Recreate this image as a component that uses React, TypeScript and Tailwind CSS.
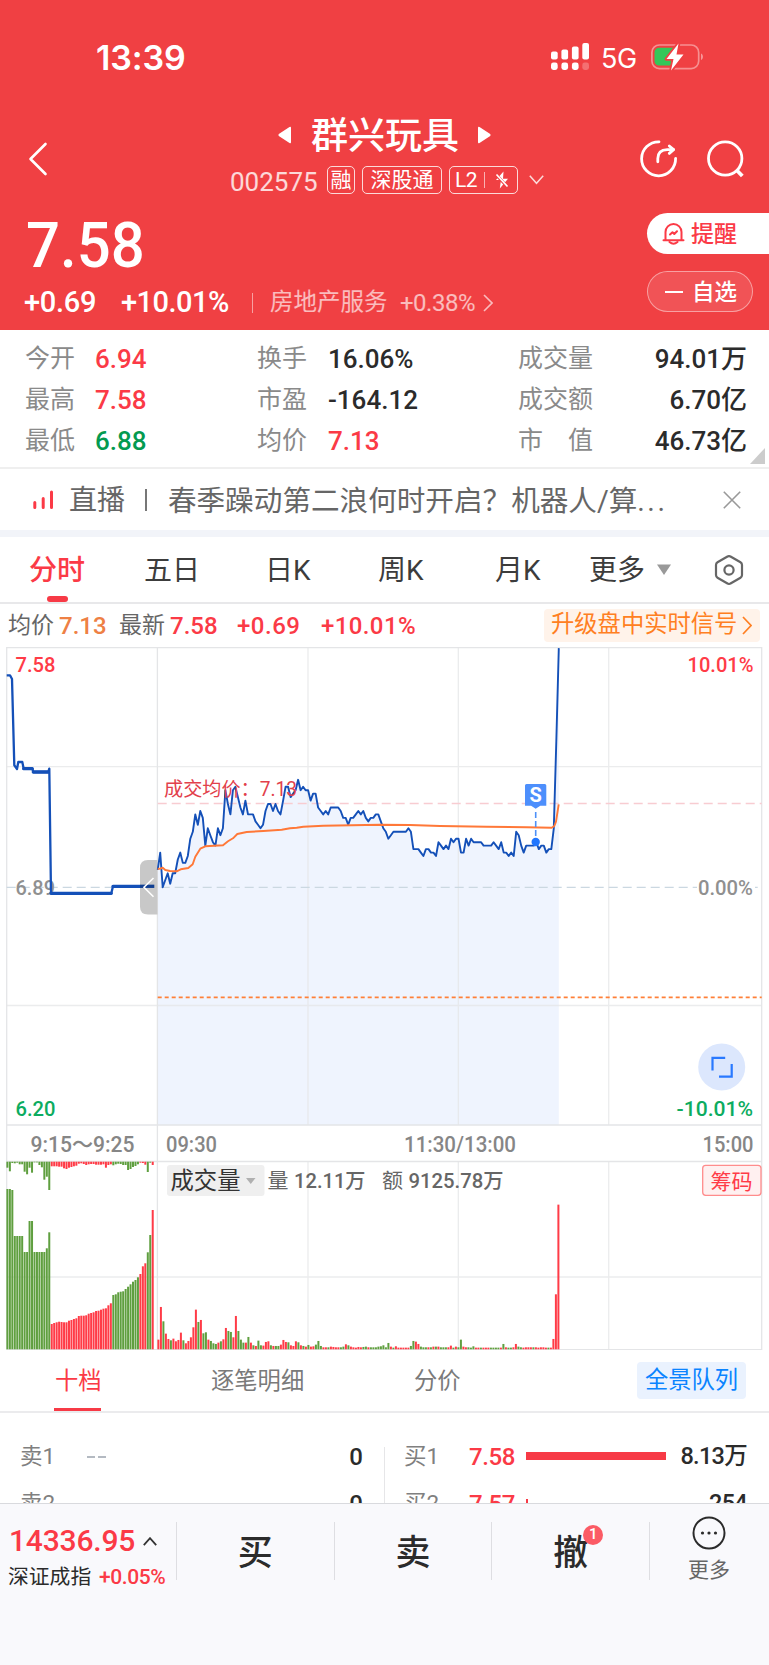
import type { ReactNode } from "react";

const UP = "#ff3b47";
const DOWN = "#5f9f3f";

// Minute prices, in ticks of 0.01 above the previous close (6.89)
const PRICE_TICKS = [
  5, 10, 0, 2, 4, 1, 4, 4, 8, 10, 7, 7, 9, 14, 16, 21, 18, 22, 20, 12,
  17, 15, 13, 12, 17, 15, 17, 28, 24, 21, 28, 29, 26, 23, 21, 25, 21, 21, 21, 19,
  18, 17, 18, 22, 24, 24, 22, 24, 22, 21, 25, 29, 29, 26, 27, 28, 31, 28, 29, 28,
  28, 25, 27, 27, 23, 22, 21, 22, 21, 23, 23, 23, 23, 22, 20, 20, 18, 20, 20, 21,
  22, 21, 22, 20, 19, 20, 20, 21, 21, 19, 17, 16, 14, 15, 16, 16, 16, 16, 16, 16,
  17, 16, 11, 11, 11, 10, 9, 11, 11, 10, 10, 9, 13, 12, 11, 12, 11, 14, 13, 14,
  14, 10, 10, 14, 12, 14, 13, 13, 13, 13, 12, 12, 12, 12, 13, 12, 11, 13, 10, 10,
  9, 10, 9, 16, 15, 12, 10, 12, 12, 12, 12, 13, 11, 12, 12, 10, 11, 11, 17, 42, 69
];

const AVG_POINTS =
  "157.7,868.7 160.3,868.7 162.7,867.7 165.3,870 170,871 176.7,871.3 180.7,869.3 188.3,868 192.7,864.3 195.3,856.7 200.3,848.7 205.3,846.3 223,845.3 228,841.3 233,838.3 237.3,834 246.7,832 263.3,831 281.7,829.7 290,828.3 296.7,827.7 303.3,826.7 323.3,825.7 380,824.7 410,825 440,826 486.7,826.7 526.7,827.3 551.7,827.7 554.3,826 556,821.7 558.7,804.3";

const AUCTION_POINTS =
  "6.7,675.3 10,675.3 12,679 14.3,765.3 17,769 18.3,762 22.3,762 23.7,768.7 32.3,768.7 33.3,772 48.3,772 49.3,768.7 51,893.3 111.3,893.3 113,886.3 154.3,886.3";

// Call auction: matched volume (bottom) and unmatched volume (hanging from the top)
const AUCTION_VOLUME = [
  160.3, 160.3, 159.3, 113.3, 113.3, 113.3, 113.3, 97.3, 97.3, 128.3, 128.3, 97.3, 97.3, 97.3, 97.3, 97.3, 101, 117,
  25.3, 26.3, 27, 27.6, 27.3, 27, 27, 28.6, 29.3, 30.3, 31, 33.3, 33.6, 33.6, 34, 35.6, 36.3, 37, 38.3, 38.6, 39.6, 40.6, 41, 44, 46,
  54.3, 55, 57, 57.6, 58, 60.3, 62.6, 65, 67.6, 69.3, 72,
  75.3, 83, 86, 97, 114.3, 139.3
];
const AUCTION_REST = [
  6, 9.6, 1.3, 1.6, 1, 2.6, 2.6, 10, 12.6, 6, 11, 0.7, 0.7, 3.3, 5.6, 18, 15, 28.3,
  4.6, 4.6, 4.6, 5, 5, 6.6, 7.3, 6, 5.3, 4.6, 4, 2, 1.6, 2.3, 3.3, 2.6, 2.3, 2.3, 3, 3, 3, 2.6, 6, 3.3, 2.6,
  3.6, 2.6, 2, 2.3, 3.3, 3.3, 8.3, 7.3, 5.3, 4.3, 2.6,
  1, 1.3, 3, 10.3, 1, 3.3
];

// "height + direction" for each minute, r = up and g = down
const OPEN_VOLUME =
  "29r 127r 84g 47r 31r 27g 32r 24r 28r 50r 27g 18r 25r 36r 66r 119r 82g 88r 48g 51g 29r 25g 18g 16g 20r 24g 30r 64r 55g 52g 36r 100r 55g 29g 20g 20r 37g 20r 12g 10r 26g 12g 11r 22r 24r 12g 10r 10g 10g 14r 28r 22r 21g 12r 10r 24r 21g 12r 10g 8r 13g 8r 9r 14g 25g 10g 6r 6r 6g 8r 7r 6r 6r 6g 8g 15r 12g 8r 6r 5r 7r 6r 7g 8g 6r 6g 6g 6g 8g 9g 12g 6g 19g 8r 5g 9r 5r 5r 5r 5r 5r 10g 25g 23r 16r 8g 6g 6g 6r 6g 8r 8g 8r 6g 6g 6g 6r 11r 5g 8r 6g 29g 8r 6r 6g 5g 9g 5r 5r 5g 5r 5r 5r 5g 5g 5g 5g 5r 16g 6r 5g 5g 6r 16r 8g 6g 5r 6r 6r 6r 6g 6r 5r 6r 6r 5r 5g 5r 31r 165r 434r".split(
    " "
  );

const priceLine = PRICE_TICKS.map((t, i) => `${(157.7 + i * 2.507).toFixed(1)},${(887.2 - t * 3.465).toFixed(1)}`).join(" ");

function auctionColor(i: number) {
  if (i < 18) return DOWN;
  if (i < 43) return UP;
  if (i < 54) return DOWN;
  if (i < 57) return UP;
  return i === 59 ? UP : DOWN;
}

type ChartTextProps = { x: number; y: number; w: number; size?: number; fill?: string; weight?: number; children: ReactNode };

function ChartText({ x, y, w, size = 21, fill = "#868686", weight = 500, children }: ChartTextProps) {
  return (
    <text x={x} y={y} textLength={w} lengthAdjust="spacingAndGlyphs" fontSize={size} fontWeight={weight} fill={fill}>
      {children}
    </text>
  );
}

function StatusBar() {
  return (
    <div className="flex h-[114px] items-center pl-[96px]">
      <span className="w-[455px] pt-px font-[Inter] text-[34px] font-semibold leading-none tracking-[-0.1px]">13:39</span>
      <svg width="38" height="28" viewBox="0 0 38 28" fill="#fff">
        <rect x="0" y="8.5" width="6.7" height="8" rx="2" />
        <rect x="10.4" y="6.5" width="6.7" height="10" rx="2" />
        <rect x="20.9" y="3.5" width="6.7" height="13" rx="2" />
        <rect x="31.3" y="0" width="6.7" height="16.5" rx="2" />
        <rect x="0" y="19.5" width="6.7" height="7.5" rx="2.4" />
        <rect x="10.4" y="19.5" width="6.7" height="7.5" rx="2.4" />
        <rect x="20.9" y="19.5" width="6.7" height="7.5" rx="2.4" />
        <rect x="31.3" y="19.5" width="6.7" height="7.5" rx="2.4" opacity="0.25" />
      </svg>
      <span className="ml-[12px] w-[50px] whitespace-nowrap pt-[2px] font-[Inter] text-[27px] leading-none tracking-[-0.5px]">5G</span>
      <svg width="54" height="28" viewBox="0 0 54 28">
        <rect x="0.9" y="2" width="46.8" height="23.6" rx="7.5" fill="none" stroke="#fff" strokeOpacity="0.42" strokeWidth="1.7" />
        <path d="M50 10.5c2.6.9 2.6 5.7 0 6.6z" fill="#fff" fillOpacity="0.45" />
        <path d="M8 4.8h16v17.8H8a4.5 4.5 0 0 1-4.5-4.5V9.3A4.5 4.5 0 0 1 8 4.8z" fill="#34c759" />
        <path d="M27.5.5 15.5 16h7L20 27.5 32.5 11.5h-7z" fill="#fff" stroke="#f04043" strokeWidth="3.6" paintOrder="stroke" strokeLinejoin="round" />
      </svg>
    </div>
  );
}

function TitleBar() {
  return (
    <div className="flex h-[90px]">
      <div className="flex w-[230px] items-center pl-[28px]">
        <svg width="21" height="34" viewBox="0 0 21 34" fill="none" stroke="#fff" strokeWidth="2.6" strokeLinecap="round" strokeLinejoin="round">
          <path d="M17.5 2 2.500 17l15 15" />
        </svg>
      </div>
      <div className="w-[326px]">
        <div className="flex h-[42px] items-center pl-[48px]">
          <svg width="13" height="18" viewBox="0 0 13 18" fill="#fff">
            <path d="M11.500 1Q13 0 13 2v14q0 2-1.500 1L.8 10Q0 9 .8 8z" />
          </svg>
          <h1 className="ml-[20px] w-[167px] whitespace-nowrap pt-[2px] text-[37px] font-medium leading-none">群兴玩具</h1>
          <svg width="13" height="18" viewBox="0 0 13 18" fill="#fff">
            <path d="M1.500 1Q0 0 0 2v14q0 2 1.500 1l10.700-7q.8-1 0-2z" />
          </svg>
        </div>
        <div className="flex h-[48px] items-center">
          <span className="w-[97px] pt-[3px] text-[26px] leading-none text-white/80">002575</span>
          <span className="flex h-[28px] w-[28px] items-center justify-center rounded-[5px] border border-white/80 pt-px text-[21px] leading-none">融</span>
          <span className="ml-[7px] flex h-[28px] w-[80px] items-center justify-center whitespace-nowrap rounded-[5px] border border-white/80 pt-px text-[21px] leading-none">
            深股通
          </span>
          <span className="ml-[7px] flex h-[28px] w-[69px] items-center rounded-[5px] border border-white/80 pl-[5px]">
            <span className="w-[29px] text-[21px] leading-none tracking-[-0.5px]">L2</span>
            <span className="h-4 w-px bg-white/60" />
            <svg className="ml-[10px]" width="14" height="18" viewBox="0 0 14 18">
              <path d="M8.500.5 1 9h5L4.800 17.500 13 7.800H8z" fill="#fff" />
              <path d="M1 3.500 12.500 16" stroke="#f04043" strokeWidth="3" />
              <path d="M1.500 3.500 12.500 15.500" stroke="#fff" strokeWidth="1.700" />
            </svg>
          </span>
          <svg className="ml-[11px] shrink-0" width="15" height="10" viewBox="0 0 15 10" fill="none" stroke="#fff" strokeOpacity="0.8" strokeWidth="1.5">
            <path d="m.8.800 6.700 7.500L14.200.8" />
          </svg>
        </div>
      </div>
      <div className="flex items-center pl-[84px]">
        <svg width="38" height="38" viewBox="0 0 38 38" fill="none" stroke="#fff" strokeWidth="2.8" strokeLinecap="round" strokeLinejoin="round">
          <path d="M19 1.800A17 17 0 1 0 35.600 18.300" />
          <path d="M17.800 21.800v-3.300q0-8.500 9.500-8.900h6.200" />
          <path d="m29.300 6 4.300 3.600-4.300 3.800" />
        </svg>
        <svg className="ml-[29px]" width="38" height="38" viewBox="0 0 38 38" fill="none" stroke="#fff" strokeWidth="2.8">
          <circle cx="18.2" cy="18.5" r="16.7" />
          <path d="m29.500 30 5.800 6" strokeWidth="3.8" />
        </svg>
      </div>
    </div>
  );
}

function PriceSummary() {
  return (
    <div className="flex h-[126px] justify-between">
      <div>
        <div className="flex h-[81px] items-center pl-[26px] pt-[2px] text-[63px] font-medium leading-none">
          <span className="origin-left scale-x-[0.95]">7.58</span>
        </div>
        <div className="flex h-[34px] items-center whitespace-nowrap pl-[24px] pt-px leading-none">
          <span className="w-[97px] text-[29px] font-medium tracking-[-0.3px]">+0.69</span>
          <span className="w-[131px] text-[29px] font-medium tracking-[-0.5px]">+10.01%</span>
          <span className="h-[20px] w-px bg-white/50" />
          <span className="ml-[17px] w-[130px] text-[23.5px] text-white/65">房地产服务</span>
          <span className="w-[83px] text-[24px] tracking-[-0.5px] text-white/65">+0.38%</span>
          <svg width="10" height="18" viewBox="0 0 10 18" fill="none" stroke="#fff" strokeOpacity="0.65" strokeWidth="1.6">
            <path d="m1 1 8 8-8 8" />
          </svg>
        </div>
      </div>
      <div className="flex w-[122px] flex-col gap-[17px] pt-[9px]">
        <button className="flex h-[41px] items-center rounded-l-full bg-white pl-[15px] text-[#fb3a46]">
          <svg width="23" height="23" viewBox="0 0 23 23" fill="none" stroke="currentColor" strokeWidth="2" strokeLinejoin="round" strokeLinecap="round">
            <path d="M3.500 17.500V10a8 8 0 0 1 16 0v7.500M1.500 18.300h20" />
            <path d="M7.500 20q4 3.500 8 0" />
            <path d="m8 12.500 2.500-2.300 1.800 1.800L15 9.300" />
          </svg>
          <span className="ml-[6px] pt-px text-[23px] font-medium leading-none">提醒</span>
        </button>
        <button className="flex h-[41px] w-[106px] items-center rounded-full border border-white/45 bg-white/10 pl-[17px]">
          <span className="h-[2px] w-[18px] bg-white" />
          <span className="ml-[9px] pt-px text-[22.5px] font-medium leading-none">自选</span>
        </button>
      </div>
    </div>
  );
}

const STATS = [
  ["今开", "6.94", "text-[#fb3a46]", "换手", "16.06%", "text-[#2b2b2b]", "成交量", "94.01万"],
  ["最高", "7.58", "text-[#fb3a46]", "市盈", "-164.12", "text-[#2b2b2b]", "成交额", "6.70亿"],
  ["最低", "6.88", "text-[#049a50]", "均价", "7.13", "text-[#fb3a46]", "市 值", "46.73亿"]
];

function Stats() {
  return (
    <div className="relative h-[139px] border-b-2 border-[#efefef] pt-[8px]">
      {STATS.map(([a, av, ac, b, bv, bc, c, cv]) => (
        <div key={a} className="flex h-[41.2px] items-center whitespace-nowrap pl-[25px] text-[26px] leading-none">
          <span className="w-[70px] pb-px text-[25px] text-[#8a8a8a]">{a}</span>
          <span className={`w-[162px] font-medium ${ac}`}>{av}</span>
          <span className="w-[71px] pb-px text-[25px] text-[#8a8a8a]">{b}</span>
          <span className={`w-[190px] font-medium ${bc}`}>{bv}</span>
          <span className="flex w-[75px] justify-between pb-px text-[25px] text-[#8a8a8a]">
            {c.split(" ").map((part) => (
              <span key={part}>{part}</span>
            ))}
          </span>
          <span className="w-[154px] text-right font-medium text-[#2b2b2b]">{cv}</span>
        </div>
      ))}
      <svg className="absolute bottom-[3px] right-[4px]" width="15" height="16" viewBox="0 0 15 16">
        <path d="M15 0v16H0z" fill="#ccc" />
      </svg>
    </div>
  );
}

function LiveBanner() {
  return (
    <div className="flex h-[61px] items-center whitespace-nowrap pl-[33px] text-[28.6px] leading-none text-[#666]">
      <svg width="21" height="20" viewBox="0 0 21 20" stroke="#fb3a46" strokeWidth="3" strokeLinecap="round">
        <path d="M1.800 12.500v5M10.200 8.500v9M18.500 2v15.500" />
      </svg>
      <span className="ml-[15px] w-[76px] pt-[3px] text-[28px]">直播</span>
      <span className="h-[22px] w-[2px] bg-[#777]" />
      <span className="ml-[21px] w-[555px] pt-[3px]">
        春季躁动第二浪何时开启？机器人/算<span className="tracking-[2.5px]">...</span>
      </span>
      <svg width="18" height="18" viewBox="0 0 18 18" stroke="#999" strokeWidth="1.6">
        <path d="m.8.800 16.400 16.400M17.200.8.800 17.200" />
      </svg>
    </div>
  );
}

function PeriodTabs() {
  return (
    <nav className="flex h-[67px] items-center whitespace-nowrap border-b-2 border-[#e8e8ea] text-[28px] leading-none text-[#3c3c3c]">
      <span className="relative ml-[29px] flex h-full w-[115px] items-center pt-[3px] font-medium text-[#fb3a46]">
        分时
        <span className="absolute bottom-0 left-[18px] h-[6px] w-[21px] rounded-[3px] bg-[#f73a46]" />
      </span>
      <span className="w-[121px] pt-[3px]">五日</span>
      <span className="w-[113px] pt-[3px]">日K</span>
      <span className="w-[117px] pt-[3px]">周K</span>
      <span className="w-[94px] pt-[3px]">月K</span>
      <span className="w-[68px] pt-[3px]">更多</span>
      <svg width="14" height="11" viewBox="0 0 14 11" fill="#999">
        <path d="M0 .5h14L7 11z" />
      </svg>
      <svg className="ml-[43px]" width="30" height="30" viewBox="0 0 30 30" fill="none" stroke="#666" strokeWidth="2.2" strokeLinejoin="round">
        <path d="M13.500 1.500q1.500-.8 3 0l10 5.800q1.500.9 1.500 2.600v10.200q0 1.700-1.500 2.600l-10 5.800q-1.500.8-3 0l-10-5.800Q2 21.800 2 20.100V9.900q0-1.700 1.500-2.600z" />
        <circle cx="15" cy="15" r="4.6" />
      </svg>
    </nav>
  );
}

function QuoteLine() {
  return (
    <div className="flex h-[42px] items-center whitespace-nowrap pl-[8px] text-[24px] font-medium leading-none text-[#fb3a46]">
      <span className="w-[51px] pt-px text-[23px] font-normal text-[#666]">均价</span>
      <span className="w-[60px] pt-[2px] text-[#ee8044]">7.13</span>
      <span className="w-[51px] pt-px text-[23px] font-normal text-[#666]">最新</span>
      <span className="w-[67px] pt-[2px]">7.58</span>
      <span className="w-[84px] pt-[2px] tracking-[0.5px]">+0.69</span>
      <span className="w-[223px] pt-[2px] tracking-[0.4px]">+10.01%</span>
      <span className="flex h-[33px] w-[216px] items-center rounded-[4px] bg-[#fff3ea] pl-[7px] text-[23.3px] font-normal text-[#ff7f22]">
        升级盘中实时信号
        <svg className="ml-[5px]" width="10" height="19" viewBox="0 0 10 19" fill="none" stroke="currentColor" strokeWidth="1.7">
          <path d="m1 1 8 8.500-8 8.500" />
        </svg>
      </span>
    </div>
  );
}

function Chart() {
  return (
    <svg className="block" width="769" height="704" viewBox="0 646 769 704">
      <polygon points={`157.7,1125 ${priceLine} 558.8,1125`} fill="#eff4fe" />
      <g stroke="#e4e5e7" strokeWidth="1.3" fill="none">
        <path d="M6.700 647.600H761.700V1349.600H6.700zM157.400 647.600V1349.600" />
        <path d="M6.700 766.700H761.700M6.700 1005.500H761.700M308 647.600V1125M458.300 647.600V1125M608.700 647.600V1125" strokeOpacity="0.75" />
        <path d="M6.700 1125H761.700M6.700 1161.500H761.700" />
        <path d="M6.700 1277H761.700M308 1161.500V1349.600M458.300 1161.500V1349.600M608.700 1161.500V1349.600" strokeOpacity="0.75" />
      </g>
      <path d="M6.700 887.300H761.700" stroke="#cbd8e1" strokeWidth="1.3" strokeDasharray="9 5" />
      <path d="M157.700 803.500H761.700" stroke="#f8ccd1" strokeWidth="1.4" strokeDasharray="9 5" />
      <path d="M157.700 997.400H761.700" stroke="#ff8038" strokeWidth="1.7" strokeDasharray="4 3" />

      <ChartText x={15.5} y={672.3} w={40} fill={UP}>7.58</ChartText>
      <ChartText x={15.5} y={894.5} w={39.5} fill="#909090">6.89</ChartText>
      <ChartText x={15.5} y={1116} w={40} fill="#0cac60">6.20</ChartText>
      <ChartText x={687.5} y={672.3} w={66} fill={UP}>10.01%</ChartText>
      <rect x="697" y="878" width="58" height="18" fill="#fff" />
      <ChartText x={698} y={894.5} w={55} fill="#909090">0.00%</ChartText>
      <ChartText x={676.5} y={1116} w={76.5} fill="#0cac60">-10.01%</ChartText>

      <polyline points={AUCTION_POINTS} fill="none" stroke="#1450b8" strokeWidth="2.3" strokeLinejoin="round" />
      <path d="M51 893.300H111.300M113 886.300H154.300M33.300 772H48.300M23.700 768.700H32.300" stroke="#1450b8" strokeWidth="3.3" strokeLinecap="round" />

      <path d="M157.500 860H148q-8 0-8 8V906.500q0 8 8 8H157.500z" fill="#c8c8c8" />
      <path d="M140 886.300H154.300" stroke="#103f92" strokeWidth="3.3" />
      <path d="m153.500 878-9.500 9.300 9.500 9.400" fill="none" stroke="#fff" strokeWidth="1.6" />

      <polyline points={priceLine} fill="none" stroke="#1450b8" strokeWidth="1.9" strokeLinejoin="round" />
      <polyline points={AVG_POINTS} fill="none" stroke="#ff7838" strokeWidth="1.9" strokeLinejoin="round" />
      <ChartText x={164} y={796.3} w={133} size={19.5} weight={400} fill="#e2404b">成交均价：7.13</ChartText>

      <path d="M535.700 812V838" stroke="#4d90f8" strokeWidth="1.6" strokeDasharray="6 3" />
      <path d="M525 785.500q0-1.500 1.500-1.500h18.300q1.500 0 1.500 1.500V805.800h-6l-4.600 3-4.600-3H525z" fill="#4d8ffc" />
      <text x="535.7" y="802" textAnchor="middle" fontSize="20" fontWeight="700" fill="#fff">S</text>
      <circle cx="535.7" cy="842" r="4.2" fill="#2176ff" />

      <circle cx="721.7" cy="1067" r="23.5" fill="#dce7fd" />
      <path d="M712.500 1070.500V1057.800H725.200M719 1076.700H731.700V1064" fill="none" stroke="#2979ff" strokeWidth="2.2" />

      <ChartText x={30.5} y={1151.5} w={104} size={22}>9:15～9:25</ChartText>
      <ChartText x={166} y={1151.5} w={51} size={22}>09:30</ChartText>
      <ChartText x={404} y={1151.5} w={112} size={22}>11:30/13:00</ChartText>
      <ChartText x={702.5} y={1151.5} w={51} size={22}>15:00</ChartText>

      {AUCTION_VOLUME.map((h, i) => (
        <g key={i} fill={auctionColor(i)}>
          <rect x={6.4 + i * 2.463} y={1349.3 - h} width="2" height={h} />
          <rect x={6.4 + i * 2.463} y="1161.7" width="2" height={AUCTION_REST[i]} />
        </g>
      ))}
      {OPEN_VOLUME.map((v, i) => {
        const h = parseInt(v) / 3;
        return <rect key={i} x={157.4 + i * 2.5} y={1349.3 - h} width="2" height={h} fill={v.endsWith("r") ? UP : DOWN} />;
      })}

      <rect x="167" y="1165" width="97.5" height="31" rx="3" fill="#efefef" />
      <ChartText x={170.5} y={1188.5} w={70} size={23.3} weight={400} fill="#333">成交量</ChartText>
      <path d="M246 1178h9.500l-4.750 6z" fill="#b0b0b0" />
      <ChartText x={267.5} y={1187.5} w={21} size={20} weight={400} fill="#666">量</ChartText>
      <ChartText x={294} y={1187.5} w={71.5} size={20.5} fill="#666">12.11万</ChartText>
      <ChartText x={382} y={1187.5} w={21} size={20} weight={400} fill="#666">额</ChartText>
      <ChartText x={408.5} y={1187.5} w={95} size={20.5} fill="#666">9125.78万</ChartText>
      <rect x="702.7" y="1165.3" width="58.3" height="30" rx="3" fill="#fff0f0" stroke="#ff8c8c" strokeWidth="1.3" />
      <ChartText x={710.5} y={1188.5} w={42} size={21} weight={400} fill={UP}>筹码</ChartText>
    </svg>
  );
}

function DepthTabs() {
  return (
    <div className="flex h-[63px] items-center whitespace-nowrap border-b-2 border-[#ebebed] text-[23.3px] leading-none text-[#7a7a7a]">
      <span className="relative ml-[54px] flex h-full w-[157px] items-center pl-[1px] pt-[2px] text-[#fb3a46]">
        十档
        <span className="absolute bottom-0 left-0 h-[3px] w-[47px] bg-[#f73a46]" />
      </span>
      <span className="w-[203px] pt-[2px]">逐笔明细</span>
      <span className="w-[223px] pt-[2px]">分价</span>
      <span className="flex h-[37px] w-[109px] items-center justify-center rounded-[4px] bg-[#eaf2fe] pt-px text-[#0a84ff]">全景队列</span>
    </div>
  );
}

const DEPTH = [
  { level: 1, price: "7.58", bar: 140, amount: "8.13万" },
  { level: 2, price: "7.57", bar: 2, amount: "254" }
];

function OrderBook() {
  return (
    <div className="h-[90px] overflow-hidden pt-[20px]">
      {DEPTH.map(({ level, price, bar, amount }) => (
        <div key={level} className="flex h-[47px] items-center whitespace-nowrap pl-[20px] text-[24px] leading-none text-[#2b2b2b]">
          <span className="w-[67px] text-[22.5px] text-[#808080]">卖{level}</span>
          <span className="flex w-[119px] gap-[3px]">
            <span className="h-[2px] w-[8px] bg-[#b4bac2]" />
            <span className="h-[2px] w-[8px] bg-[#b4bac2]" />
          </span>
          <span className="w-[157px] text-right font-medium">0</span>
          <span className={`ml-[21px] w-px bg-[#e6e6e8] ${level === 1 ? "h-[33px] translate-y-[7px]" : "h-full"}`} />
          <span className="ml-[19px] w-[65px] text-[22.5px] text-[#808080]">买{level}</span>
          <span className="w-[57px] font-medium tracking-[-0.4px] text-[#fb3a46]">{price}</span>
          <span className="flex w-[140px] items-center">
            <span className="-mt-[2px] h-[8px] bg-[#f73a46]" style={{ width: bar }} />
          </span>
          <span className="w-[81px] text-right text-[23.5px] font-medium tracking-[-0.7px]">{amount}</span>
        </div>
      ))}
    </div>
  );
}

function BottomBar() {
  return (
    <footer className="flex h-[162px] whitespace-nowrap border-t border-[#d9dade] bg-[#f9f9fc] pt-[18px] leading-none text-[#2b2b2b]">
      <div className="h-[58px] w-[176px]">
        <div className="flex h-[38px] items-center pl-[9px]">
          <span className="w-[134px] text-[30px] font-medium tracking-[-0.2px] text-[#fb3a46]">14336.95</span>
          <svg width="14" height="9" viewBox="0 0 14 9" fill="none" stroke="#333" strokeWidth="1.8">
            <path d="m.8 8.200 6.200-7 6.200 7" />
          </svg>
        </div>
        <div className="flex h-[34px] items-center pl-[8px]">
          <span className="w-[91px] text-[20.8px]">深证成指</span>
          <span className="text-[21px] font-medium tracking-[-0.4px] text-[#fb3a46]">+0.05%</span>
        </div>
      </div>
      {["买", "卖", "撤"].map((action) => (
        <div key={action} className="flex h-[58px] w-[157.7px] items-center justify-center border-l border-[#dedee2] pt-[4px] text-[35px] font-medium">
          <span className="relative">
            {action}
            {action === "撤" && (
              <span className="absolute -top-[11px] left-[30px] flex h-[20px] w-[20px] items-center justify-center rounded-full bg-[#fb5b65] text-[15px] text-white">
                1
              </span>
            )}
          </span>
        </div>
      ))}
      <div className="flex h-[58px] flex-1 flex-col items-center border-l border-[#dedee2] pr-px">
        <svg className="-mt-[6px] shrink-0" width="34" height="34" viewBox="0 0 34 34">
          <circle cx="17" cy="17" r="15.5" fill="none" stroke="#2b2b2b" strokeWidth="2" />
          <g fill="#2b2b2b">
            <circle cx="10.5" cy="17" r="1.6" />
            <circle cx="17" cy="17" r="1.6" />
            <circle cx="23.5" cy="17" r="1.6" />
          </g>
        </svg>
        <span className="mt-[10px] text-[21px] text-[#666]">更多</span>
      </div>
    </footer>
  );
}

export default function App() {
  return (
    <main className="h-[1665px] w-[769px] overflow-hidden bg-white font-[Roboto,'Noto_Sans_CJK_SC',sans-serif]">
      <header className="h-[330px] bg-[#f04043] text-white">
        <StatusBar />
        <TitleBar />
        <PriceSummary />
      </header>
      <Stats />
      <LiveBanner />
      <div className="h-[7px] bg-[#f2f4f9]" />
      <PeriodTabs />
      <QuoteLine />
      <Chart />
      <DepthTabs />
      <OrderBook />
      <BottomBar />
    </main>
  );
}
